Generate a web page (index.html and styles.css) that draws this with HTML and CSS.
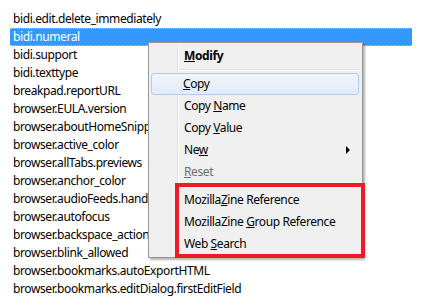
FILE: index.html
```html
<!DOCTYPE html>
<html>
<head>
<meta charset="utf-8">
<link rel="stylesheet" href="styles.css">
</head>
<body>
<div class="list">
  <div class="row">bidi.edit.delete_immediately</div>
  <div class="row selected">bidi.numeral</div>
  <div class="row">bidi.support</div>
  <div class="row">bidi.texttype</div>
  <div class="row">breakpad.reportURL</div>
  <div class="row">browser.EULA.version</div>
  <div class="row">browser.aboutHomeSnippets.updateUrl</div>
  <div class="row">browser.active_color</div>
  <div class="row">browser.allTabs.previews</div>
  <div class="row">browser.anchor_color</div>
  <div class="row">browser.audioFeeds.handler</div>
  <div class="row">browser.autofocus</div>
  <div class="row">browser.backspace_action</div>
  <div class="row">browser.blink_allowed</div>
  <div class="row">browser.bookmarks.autoExportHTML</div>
  <div class="row">browser.bookmarks.editDialog.firstEditField</div>
</div>

<div class="menu">
  <div class="item bold"><u>M</u>odify</div>
  <div class="sep"></div>
  <div class="item hover"><u>C</u>opy</div>
  <div class="item">Copy <u>N</u>ame</div>
  <div class="item">Copy <u>V</u>alue</div>
  <div class="item sub">Ne<u>w</u><span class="arrow"></span></div>
  <div class="item disabled"><u>R</u>eset</div>
  <div class="sep"></div>
  <div class="item">Mozilla<u>Z</u>ine Reference</div>
  <div class="item">MozillaZine <u>G</u>roup Reference</div>
  <div class="item">Web <u>S</u>earch</div>
</div>
<div class="highlight"></div>
</body>
</html>
```

FILE: styles.css
```css
html, body {
  margin: 0;
  padding: 0;
  background: #fff;
  width: 423px;
  height: 306px;
  overflow: hidden;
  font-family: "Noto Sans", "Open Sans", sans-serif;
  font-size: 12px;
  letter-spacing: -0.4px;
  color: #000;
}

.list {
  padding-top: 10px;
  padding-left: 10px;
  width: 402px;
}

.row {
  height: 18px;
  line-height: 18px;
  padding-left: 3px;
  white-space: nowrap;
  overflow: hidden;
  box-sizing: border-box;
}

.row.selected {
  background: #3399ff;
  color: #fff;
  border-top: 1px dotted #f2c66c;
  border-bottom: 1px dotted #f2c66c;
  line-height: 16px;
}

.menu {
  position: absolute;
  left: 148px;
  top: 42px;
  width: 209px;
  padding: 2px;
  background: #f0f0f0;
  border: 1px solid #979797;
  box-shadow: 2px 2px 2px rgba(0, 0, 0, 0.3);
  background-image: linear-gradient(to right, transparent 28px, #e2e3e3 28px, #e2e3e3 29px, #ffffff 29px, #ffffff 30px, transparent 30px);
}

.item {
  position: relative;
  height: 22px;
  line-height: 22px;
  padding-left: 33px;
  white-space: nowrap;
}

.item u {
  text-decoration: underline;
  text-underline-offset: 1px;
}

.item.bold {
  font-weight: bold;
}

.item.hover {
  box-sizing: border-box;
  width: 208px;
  padding-left: 31px;
  border: 1px solid #aeccf1;
  border-radius: 3px;
  line-height: 20px;
  background: linear-gradient(#f1f6fc, #e0ecfa);
}

.item.disabled {
  color: #6d6d6d;
}

.arrow {
  position: absolute;
  right: 10px;
  top: 7px;
  width: 0;
  height: 0;
  border-top: 4px solid transparent;
  border-bottom: 4px solid transparent;
  border-left: 4px solid #000;
}

.sep {
  height: 6px;
  margin-left: 30px;
  background: linear-gradient(to bottom, transparent 2px, #e2e3e3 2px, #e2e3e3 3px, #ffffff 3px, #ffffff 4px, transparent 4px);
}

.highlight {
  position: absolute;
  left: 175px;
  top: 183px;
  width: 182px;
  height: 67px;
  border: 4px solid #ed1c24;
}
```
